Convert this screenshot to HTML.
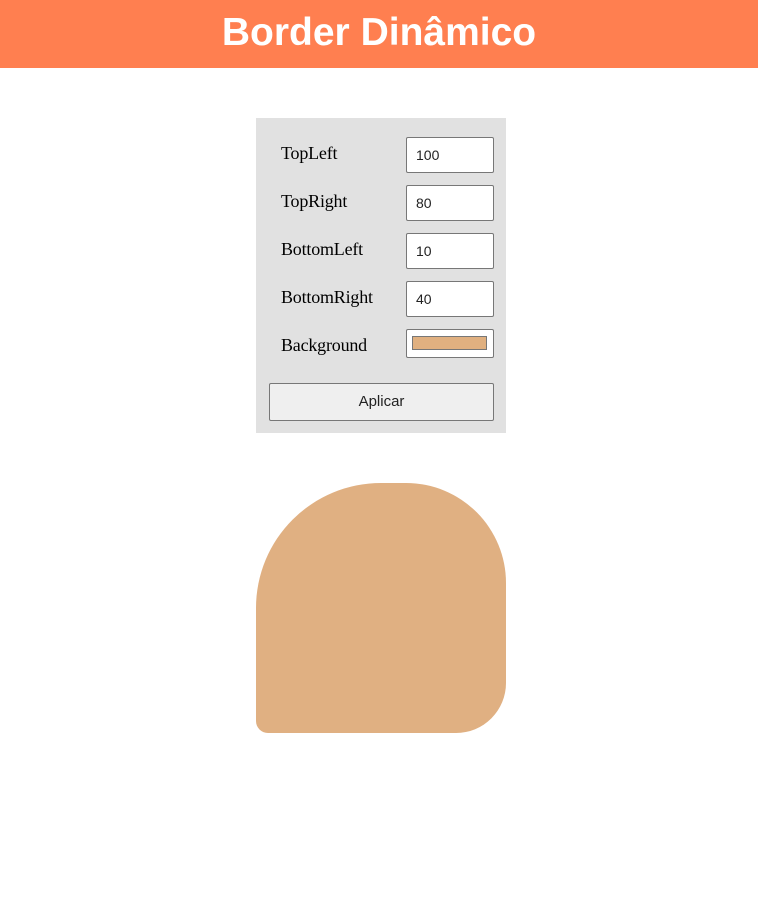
<!DOCTYPE html>
<html><head><style>
*{box-sizing:border-box}
body{margin:0;width:758px;height:904px;background:#fff;position:relative;overflow:hidden}
.hd{position:absolute;left:0;top:0;width:758px;height:68px;background:#ff7f50;color:#fff;font:bold 39px "Liberation Sans",sans-serif;text-align:center;line-height:66px}
.panel{position:absolute;left:256px;top:118px;width:250px;height:315px;background:#e1e1e1}
.l{position:absolute;left:281px;font:18px "Liberation Serif",serif;color:#000;letter-spacing:-0.2px}
.in{position:absolute;left:406px;width:88px;height:36px;background:#fff;border:1px solid #777;border-radius:2px;font:14px "Liberation Sans",sans-serif;padding-left:9px;line-height:34px;color:#222}
.sw{position:absolute;left:412px;top:336px;width:75px;height:14px;background:#e0b080;border:1px solid #777}
.btn{position:absolute;left:269px;top:383px;width:225px;height:38px;background:#efefef;border:1px solid #777;border-radius:2px;font:15px "Liberation Sans",sans-serif;text-align:center;line-height:36px;color:#222}
.shape{position:absolute;left:256px;top:483px;width:250px;height:250px;background:#e0b082;border-radius:125px 100px 50px 12px}
</style></head><body>
<div class="hd">Border Dinâmico</div>
<div class="panel"></div>
<div class="l" style="top:143px">TopLeft</div>
<div class="l" style="top:191px">TopRight</div>
<div class="l" style="top:239px">BottomLeft</div>
<div class="l" style="top:287px">BottomRight</div>
<div class="l" style="top:335px">Background</div>
<div class="in" style="top:137px">100</div>
<div class="in" style="top:185px">80</div>
<div class="in" style="top:233px">10</div>
<div class="in" style="top:281px">40</div>
<div class="in" style="top:329px;height:29px"></div>
<div class="sw"></div>
<div class="btn">Aplicar</div>
<div class="shape"></div>
</body></html>
